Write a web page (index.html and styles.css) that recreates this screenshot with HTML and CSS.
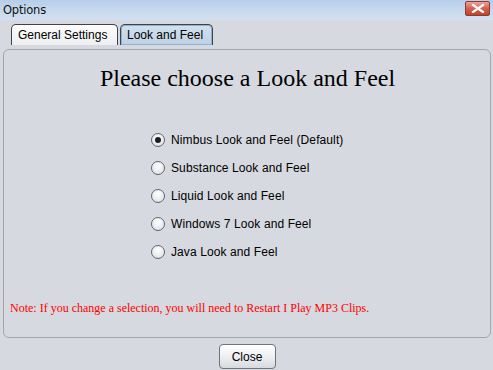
FILE: index.html
```html
<!DOCTYPE html>
<html>
<head>
<meta charset="utf-8">
<link rel="stylesheet" href="styles.css">
</head>
<body>
<div class="window">
  <div class="titlebar">
    <span class="title">Options</span>
    <span class="close-x">
      <svg width="14" height="9" viewBox="0 0 14 9"><path d="M2 1 L12 8 M12 1 L2 8" stroke="#fff" stroke-width="2.2" stroke-linecap="square"/></svg>
    </span>
  </div>
  <div class="tabs">
    <div class="tab">General Settings</div>
    <div class="tab active">Look and Feel</div>
  </div>
  <div class="panel">
    <h1 class="heading">Please choose a Look and Feel</h1>
    <div class="options">
      <label class="opt"><span class="radio checked"></span>Nimbus Look and Feel (Default)</label>
      <label class="opt"><span class="radio"></span>Substance Look and Feel</label>
      <label class="opt"><span class="radio"></span>Liquid Look and Feel</label>
      <label class="opt"><span class="radio"></span>Windows 7 Look and Feel</label>
      <label class="opt"><span class="radio"></span>Java Look and Feel</label>
    </div>
    <p class="note">Note: If you change a selection, you will need to Restart I Play MP3 Clips.</p>
  </div>
  <div class="footer">
    <button class="btn">Close</button>
  </div>
</div>
</body>
</html>
```
FILE: styles.css
```css
html, body {
  margin: 0;
  padding: 0;
  background: #d6d9df;
  overflow: hidden;
}
.window {
  width: 493px;
  height: 370px;
  display: flex;
  flex-direction: column;
  font-family: "Liberation Sans", Arial, sans-serif;
  color: #000;
}
.titlebar {
  height: 20px;
  flex: none;
  display: flex;
  align-items: center;
  justify-content: space-between;
  background: linear-gradient(#b7cee8, #c9dbef 60%, #d3e1f1);
  padding: 0 3px 0 3px;
}
.title {
  font-family: "DejaVu Sans", sans-serif;
  font-size: 11.5px;
  color: #111;
  letter-spacing: -0.2px;
}
.close-x {
  width: 23px;
  height: 13px;
  margin-top: -3px;
  border: 1px solid #8d3a30;
  border-radius: 2px;
  background: linear-gradient(#eba39a, #d5604f 50%, #c0402c);
  display: flex;
  align-items: center;
  justify-content: center;
}
.tabs {
  display: flex;
  gap: 2px;
  padding: 4px 0 0 11px;
  height: 22px;
  flex: none;
}
.tab {
  height: 20px;
  line-height: 20px;
  padding: 0 6px;
  border: 1px solid #3f4348;
  border-bottom: none;
  border-radius: 5px 5px 0 0;
  background: linear-gradient(#fdfdfd, #eceef0);
  font-size: 12px;
  box-sizing: content-box;
  white-space: nowrap;
}
.tab:first-child {
  width: 93px;
}
.tab.active {
  width: 79px;
  background: linear-gradient(#d3e1ef, #bed0e3);
  box-shadow: inset 0 0 0 1px #8fb1d5;
}
.panel {
  flex: none;
  margin: 3px 2px 0 3px;
  height: 287px;
  border: 1px solid #a3a7ad;
  border-radius: 6px;
  background: #d6d9df;
  display: flex;
  flex-direction: column;
}
.heading {
  margin: 14px 0 0 0;
  font-family: "Liberation Serif", "Times New Roman", serif;
  font-weight: normal;
  font-size: 24px;
  line-height: 28px;
  text-align: center;
  padding-left: 1px;
}
.options {
  margin: 34px 0 0 147px;
  display: flex;
  flex-direction: column;
}
.opt {
  height: 28px;
  display: flex;
  align-items: center;
  font-size: 12px;
  letter-spacing: 0.1px;
}
.radio {
  width: 12px;
  height: 12px;
  border: 1px solid #62666c;
  border-radius: 50%;
  background: radial-gradient(circle at 50% 35%, #ffffff, #e4e6e9 70%, #cfd2d6);
  margin-right: 6px;
  display: flex;
  align-items: center;
  justify-content: center;
  flex: none;
}
.radio.checked::after {
  content: "";
  width: 6px;
  height: 6px;
  border-radius: 50%;
  background: #1b1d20;
}
.note {
  margin: 34px 0 0 6px;
  font-family: "Liberation Serif", "Times New Roman", serif;
  font-size: 12px;
  line-height: 16px;
  color: #ff0000;
}
.footer {
  display: flex;
  justify-content: center;
  padding-top: 6px;
  padding-left: 1px;
}
.btn {
  width: 57px;
  height: 25px;
  border: 1px solid #6f737a;
  border-radius: 4px;
  background: linear-gradient(#ffffff, #eef0f2 50%, #d7dade);
  font-family: "Liberation Sans", Arial, sans-serif;
  font-size: 12px;
  color: #000;
  padding: 0;
}
```
